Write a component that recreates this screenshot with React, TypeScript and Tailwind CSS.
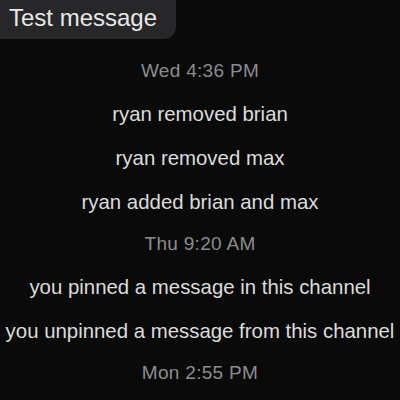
import React from 'react';

type Item = { kind: 'time' | 'event'; text: string };

const items: Item[] = [
  { kind: 'time', text: 'Wed 4:36 PM' },
  { kind: 'event', text: 'ryan removed brian' },
  { kind: 'event', text: 'ryan removed max' },
  { kind: 'event', text: 'ryan added brian and max' },
  { kind: 'time', text: 'Thu 9:20 AM' },
  { kind: 'event', text: 'you pinned a message in this channel' },
  { kind: 'event', text: 'you unpinned a message from this channel' },
  { kind: 'time', text: 'Mon 2:55 PM' },
];

const App: React.FC = () => {
  return (
    <div
      className="w-[400px] h-[400px] overflow-hidden bg-[#0a0a0a] text-white"
      style={{ fontFamily: '"Liberation Sans", Arial, sans-serif' }}
    >
      {/* Last sent bubble, scrolled partly off the top */}
      <div className="flex">
        <div className="h-[39px] w-[176px] bg-[#27272a] rounded-br-[12px] flex items-center pl-[9px] pb-[3px]">
          <span className="text-[24px] text-[#e8e8e8] leading-none">Test message</span>
        </div>
      </div>

      <div className="flex flex-col items-center pt-[12px]">
        {items.map((it, i) =>
          it.kind === 'time' ? (
            <div key={i} className="h-[41px] flex items-center text-[19px] tracking-[0.3px] text-[#8c8c90] whitespace-nowrap">
              {it.text}
            </div>
          ) : (
            <div key={i} className="h-[44px] flex items-center text-[20.4px] text-[#dcdcdc] whitespace-nowrap">
              {it.text}
            </div>
          )
        )}
      </div>
    </div>
  );
};

export default App;
